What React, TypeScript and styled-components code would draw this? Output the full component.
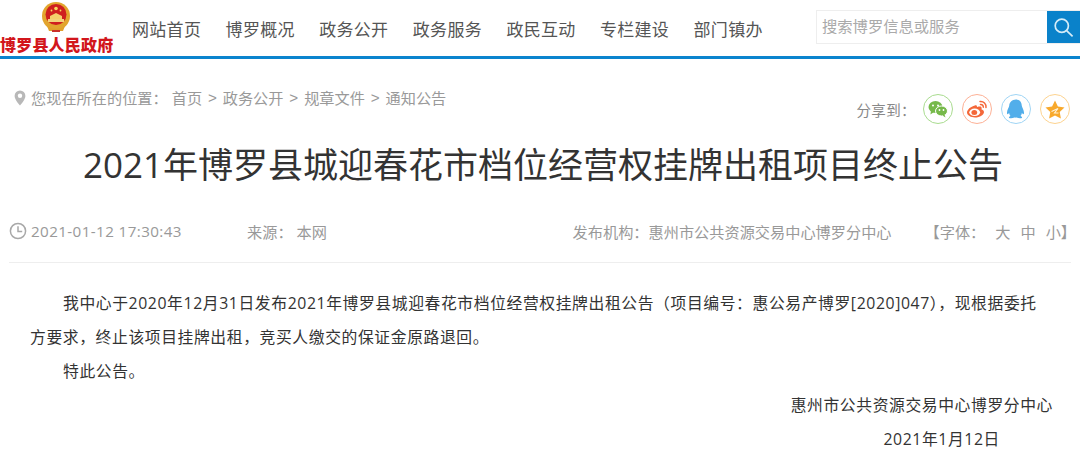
import React from "react";
import styled, { createGlobalStyle } from "styled-components";

const Global = createGlobalStyle`
  html, body { margin: 0; padding: 0; background: #fff; }
  body { width: 1080px; height: 476px; overflow: hidden; font-family: "Open Sans", "Noto Sans CJK SC", sans-serif; }
  * { box-sizing: border-box; }
`;

const Header = styled.header`
  display: flex; align-items: flex-start; height: 59px;
  border-bottom: 3px solid #0a84ce;
`;
const Logo = styled.div`
  width: 132px; flex: none; display: flex; flex-direction: column; align-items: flex-start;
`;
const Emblem = styled.svg`
  width: 30px; height: 32px; margin: 1px 0 0 41px; display: block;
`;
const LogoText = styled.div`
  font-size: 16px; line-height: 20px; height: 20px; font-weight: 900; color: #d2161c;
  letter-spacing: 0.2px; white-space: nowrap; margin-top: 1px;
  font-family: "Noto Sans CJK SC", sans-serif;
`;
const Nav = styled.nav`
  display: flex; gap: 24.4px; padding-top: 17px; flex: none; width: 684px;
`;
const NavLink = styled.a`
  font-size: 17px; line-height: 25px; letter-spacing: 0.3px; color: #555; white-space: nowrap;
`;
const Search = styled.div`
  width: 264px; height: 34px; margin-top: 10px; flex: none; display: flex;
  border: 1px solid #eee; border-right: 0;
`;
const SearchHint = styled.div`
  flex: 1; padding-left: 5px; font-size: 15.3px; line-height: 31px; color: #aaa; white-space: nowrap;
`;
const SearchButton = styled.div`
  width: 33px; background: #0a82ca; display: flex; align-items: center; justify-content: center;
`;
const TopRow = styled.div`
  display: flex; justify-content: space-between; align-items: flex-start; height: 80px; padding: 27px 10px 0 14px;
`;
const Crumbs = styled.div`
  display: flex; align-items: center; font-size: 15.2px; line-height: 24px; color: #999; white-space: nowrap;
`;
const CrumbLabel = styled.span`
  margin-left: 5px; margin-right: 4px;
`;
const CrumbSep = styled.span`
  margin: 0 5.9px; font-family: "Liberation Sans", sans-serif;
`;
const Share = styled.div`
  display: flex; align-items: center; gap: 9px; margin-top: 8px;
`;
const ShareLabel = styled.span`
  font-size: 14.5px; color: #888; letter-spacing: 0.4px; margin-right: -2px;
`;
const ShareCircle = styled.span<{ $c: string }>`
  width: 30px; height: 30px; border-radius: 50%; border: 1px solid ${p => p.$c};
  display: flex; align-items: center; justify-content: center;
`;
const Title = styled.h1`
  margin: 0; padding-left: 6px; text-align: center; font-size: 35px; line-height: 52px; font-weight: 400; color: #333; white-space: nowrap;
`;
const Meta = styled.div`
  display: flex; align-items: center; margin: 26px 9px 0; height: 46px; padding-bottom: 18px;
  border-bottom: 1px solid #eee; font-size: 15.2px; color: #999; white-space: nowrap;
`;
const MetaTime = styled.span`
  display: flex; align-items: center; gap: 4px; width: 238px; letter-spacing: 0.4px;
`;
const MetaSource = styled.span`
  flex: 1; display: flex; gap: 4px;
`;
const MetaOrg = styled.span`
  margin-right: 33px;
`;
const MetaFont = styled.span`
  display: flex; gap: 10px; margin-right: -5px;
`;
const Article = styled.article`
  padding: 23px 30px 0 30px; font-size: 15.8px; letter-spacing: 0.6px; line-height: 34px; color: #333;
`;
const Para = styled.p`
  margin: 0; text-indent: 33px;
`;
const Sign = styled.p<{ $r: number }>`
  margin: 0; text-align: right; white-space: nowrap; margin-right: ${p => p.$r}px;
`;

const Pin = () => (
  <svg width="12" height="16" viewBox="0 0 12 16">
    <path d="M6 0.5a5.4 5.4 0 0 0-5.4 5.4C.6 9.6 6 15.5 6 15.5s5.4-5.9 5.4-9.6A5.4 5.4 0 0 0 6 .5z" fill="#b8b8b8" />
    <circle cx="6" cy="5.8" r="2.2" fill="#fff" />
  </svg>
);

const Clock = () => (
  <svg width="18" height="18" viewBox="0 0 18 18" fill="none" stroke="#a8a8a8" strokeWidth="1.5">
    <circle cx="9" cy="9" r="7.6" />
    <path d="M9 4.2V9.4H13.2" />
  </svg>
);

export default function App() {
  return (
    <>
      <Global />
      <Header>
        <Logo>
          <Emblem viewBox="0 0 30 32">
            <circle cx="15" cy="15" r="14" fill="#e2a52e" />
            <circle cx="15" cy="13.5" r="10.5" fill="#cf1f1f" />
            <path d="M6 25c5 3.5 13 3.5 18 0l-2 5H8z" fill="#e0a02a" />
            <rect x="7" y="18" width="16" height="3" fill="#f3d27a" />
            <path d="M9 18h12v-3l-6-3-6 3z" fill="#f4cf6c" />
            <circle cx="15" cy="7.5" r="1.8" fill="#f8d860" />
            <circle cx="10.5" cy="9.5" r="0.9" fill="#f8d860" />
            <circle cx="19.5" cy="9.5" r="0.9" fill="#f8d860" />
            <path d="M11 29h8v2h-8z" fill="#c9302a" />
          </Emblem>
          <LogoText>博罗县人民政府</LogoText>
        </Logo>
        <Nav>
          {["网站首页", "博罗概况", "政务公开", "政务服务", "政民互动", "专栏建设", "部门镇办"].map(n => (
            <NavLink key={n}>{n}</NavLink>
          ))}
        </Nav>
        <Search>
          <SearchHint>搜索博罗信息或服务</SearchHint>
          <SearchButton>
            <svg width="21" height="21" viewBox="0 0 21 21" fill="none" stroke="#d5ecf8" strokeWidth="1.7">
              <circle cx="8.8" cy="8.8" r="6.6" />
              <path d="M13.6 13.6L19.6 19.4" />
            </svg>
          </SearchButton>
        </Search>
      </Header>
      <TopRow>
        <Crumbs>
          <Pin />
          <CrumbLabel>您现在所在的位置：</CrumbLabel>
          首页<CrumbSep>&gt;</CrumbSep>政务公开<CrumbSep>&gt;</CrumbSep>规章文件<CrumbSep>&gt;</CrumbSep>通知公告
        </Crumbs>
        <Share>
          <ShareLabel>分享到：</ShareLabel>
          <ShareCircle $c="#a9dc8f">
            <svg width="20" height="18" viewBox="0 0 20 18">
              <ellipse cx="7.5" cy="7" rx="7" ry="6" fill="#76b94a" />
              <path d="M3 11l-.6 3.4L6 12z" fill="#76b94a" />
              <ellipse cx="13.5" cy="11" rx="6" ry="5" fill="#76b94a" stroke="#fff" strokeWidth="1" />
              <path d="M16.5 14.5l1 3-3-2z" fill="#76b94a" />
              <circle cx="5" cy="5.5" r="1" fill="#fff" /><circle cx="10" cy="5.5" r="1" fill="#fff" />
              <circle cx="11.5" cy="10" r=".9" fill="#fff" /><circle cx="15.5" cy="10" r=".9" fill="#fff" />
            </svg>
          </ShareCircle>
          <ShareCircle $c="#fdb196">
            <svg width="22" height="18" viewBox="0 0 22 18" fill="none">
              <path d="M9 5.5C4.5 6.500 1 9.800 1 12.600 1 15.600 5 17.500 9 17.500c5 0 9-2.600 9-5.500 0-2-2.500-2.500-2.500-2.500s.8-2.500-1-3c-1.500-.4-3.500.6-3.500.6s.5-3-2.500-1.600z" fill="#f4683a" />
              <ellipse cx="8.700" cy="12.300" rx="5.400" ry="3.700" fill="#fff" />
              <ellipse cx="8.300" cy="12.500" rx="2.900" ry="2.500" fill="#f4683a" />
              <path d="M14 1.500c3.500-.5 6.500 2.500 6 6M14.500 4.500c1.500-.2 3 1 2.800 2.700" stroke="#f4683a" strokeWidth="1.500" strokeLinecap="round" />
            </svg>
          </ShareCircle>
          <ShareCircle $c="#9fd5f5">
            <svg width="18" height="20" viewBox="0 0 18 20">
              <path d="M9 .5c3.800 0 5.600 2.800 5.800 6.300.1 1.500 2.500 4.500 2.200 7.500-.2 1.500-1.300.9-2.100-.3-.2 1.200-.7 2.200-1.400 2.900 1 .5 1.800 1.100 1.500 1.800-.4.900-3.500.9-5.500-.1-.9.100-1.100.1-2 0-2 1-5.100 1-5.500.1-.3-.7.500-1.300 1.500-1.800-.7-.7-1.200-1.700-1.400-2.900C1.300 15.200.2 15.800 0 14.300c-.3-3 2.100-6 2.200-7.500C2.400 3.300 5.200.5 9 .5z" fill="#52aeea" />
            </svg>
          </ShareCircle>
          <ShareCircle $c="#fdd38f">
            <svg width="20" height="19" viewBox="0 0 20 19">
              <path d="M10 .5l2.900 6 6.600.9-4.800 4.600 1.200 6.500L10 15.400l-5.900 3.100 1.200-6.500L.5 7.400l6.600-.9z" fill="#f8a92c" />
              <path d="M6.500 11.500l6.500-3-3.500 4.500h4" stroke="#fff3d8" strokeWidth="1.100" fill="none" />
            </svg>
          </ShareCircle>
        </Share>
      </TopRow>
      <Title>2021年博罗县城迎春花市档位经营权挂牌出租项目终止公告</Title>
      <Meta>
        <MetaTime><Clock />2021-01-12 17:30:43</MetaTime>
        <MetaSource><span>来源：</span><span>本网</span></MetaSource>
        <MetaOrg>发布机构：惠州市公共资源交易中心博罗分中心</MetaOrg>
        <MetaFont><span>【字体：</span><span>大</span><span>中</span><span>小】</span></MetaFont>
      </Meta>
      <Article>
        <Para>我中心于2020年12月31日发布2021年博罗县城迎春花市档位经营权挂牌出租公告（项目编号：惠公易产博罗[2020]047），现根据委托方要求，终止该项目挂牌出租，竞买人缴交的保证金原路退回。</Para>
        <Para>特此公告。</Para>
        <Sign $r={-3}>惠州市公共资源交易中心博罗分中心</Sign>
        <Sign $r={50}>2021年1月12日</Sign>
      </Article>
    </>
  );
}
